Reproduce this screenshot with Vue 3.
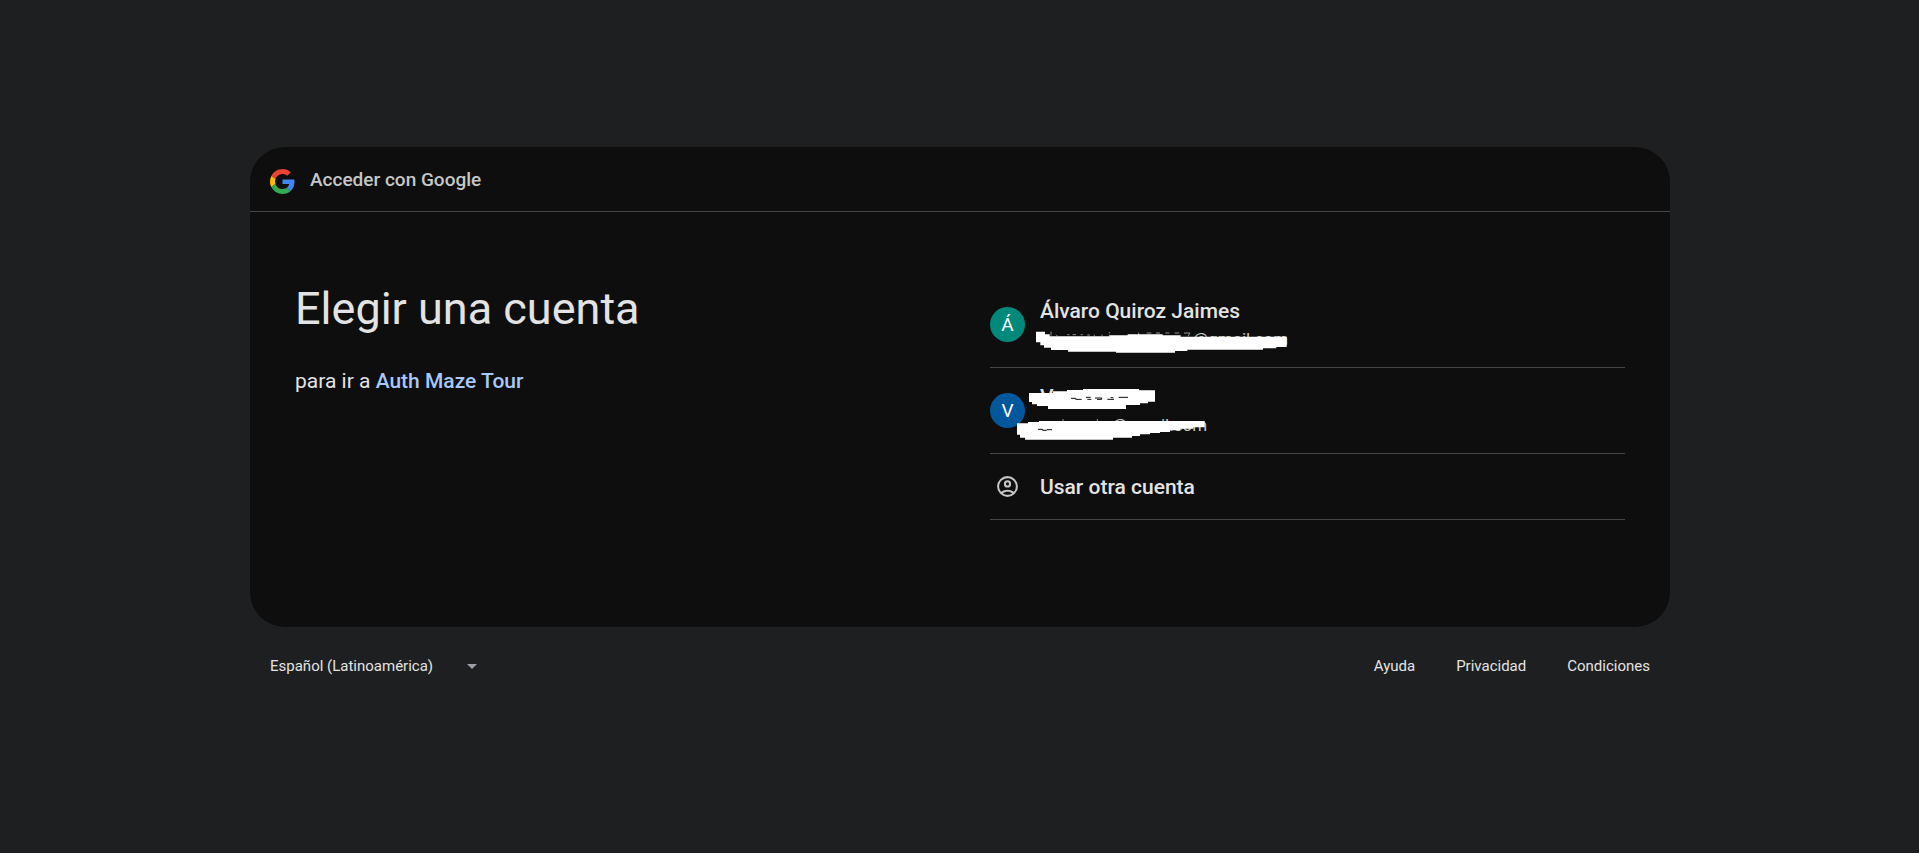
<script setup>
import { ref } from 'vue'

const language = ref('es-419')
const links = ['Ayuda', 'Privacidad', 'Condiciones']
</script>

<template>
  <div class="page">
    <main class="card">
      <header class="card-head">
        <svg class="g-logo" viewBox="0 0 48 48" aria-hidden="true">
          <path fill="#ea4335" d="M24 9.5c3.54 0 6.71 1.22 9.21 3.6l6.85-6.85C35.9 2.38 30.47 0 24 0 14.62 0 6.51 5.38 2.56 13.22l7.98 6.19C12.43 13.72 17.74 9.5 24 9.5z" />
          <path fill="#4285f4" d="M46.98 24.55c0-1.57-.15-3.09-.38-4.55H24v9.02h12.94c-.58 2.96-2.26 5.48-4.78 7.18l7.73 6c4.51-4.18 7.09-10.36 7.09-17.65z" />
          <path fill="#fbbc05" d="M10.53 28.59c-.48-1.45-.76-2.99-.76-4.59s.27-3.14.76-4.59l-7.98-6.19C.92 16.46 0 20.12 0 24c0 3.88.92 7.54 2.56 10.78l7.97-6.19z" />
          <path fill="#34a853" d="M24 48c6.48 0 11.93-2.13 15.89-5.81l-7.73-6c-2.15 1.45-4.92 2.3-8.16 2.3-6.26 0-11.57-4.22-13.47-9.91l-7.98 6.19C6.51 42.62 14.62 48 24 48z" />
        </svg>
        <span>Acceder con Google</span>
      </header>

      <div class="card-body">
        <section>
          <h1>Elegir una cuenta</h1>
          <p class="lead">para ir a <a href="#">Auth Maze Tour</a></p>
        </section>

        <ul class="accounts">
          <li>
            <button type="button" class="account">
              <span class="avatar green">Á</span>
              <span class="who">
                <span class="name">Álvaro Quiroz Jaimes</span>
                <span class="mail long">@gmail.com</span>
              </span>
              <svg class="scribble" viewBox="30 -9 960 258" aria-hidden="true">
                <path class="trace" d="M213 140v12M228 149l4 4M262 149h6M278 149h10M302 149h6M322 150h8M343 149v4M366 149v4M388 141v4M388 149v4M476 143v10M500 144h14M528 144h12M556 144h12M584 144h14M612 144h18l-6 10" />
                <path fill="#fff" d="M168 140h27v8h14v6h180v-3h54v-3h105v3h54v4h318v31h-31v4h-40v4H622v4h-37v5H408v-3H264v-5h-51v-7h-21v-7h-11v-9h-13z" />
              </svg>
            </button>
          </li>
          <li>
            <button type="button" class="account" aria-label="Cuenta V">
              <span class="avatar blue">V</span>
              <span class="who">
                <span class="name">V</span>
                <span class="mail short">@gmail.com</span>
              </span>
              <svg class="scribble" viewBox="30 -6 960 258" aria-hidden="true">
                <path class="trace" d="M249 147v8M352 147v8M480 59v4" />
                <path fill="#fff" d="M147 69h72v-5h42v-4h48v-3h168v4h48v34h-21v5h-24v5h-42v12H204v-9h-33v-5h-15v-7h-9z" />
                <path fill="#fff" d="M111 160h33v-4h33v-3h497v19h-34v4h-40v5h-30v5h-30v3h-30v4h-30v5h-24v5h-57v6H135v-6h-15v-9h-9z" />
                <path class="gap" d="M273 85h14v3h18M318 82h14M322 88h12M345 84h20v4h-14M382 88h20M392 83h8M416 82h28M174 178h14v3h12M200 179h16" />
              </svg>
            </button>
          </li>
          <li>
            <button type="button" class="account other">
              <span class="icon">
                <svg viewBox="0 0 24 24" aria-hidden="true">
                  <path fill="#c4c7c5" fill-rule="evenodd" d="M12 2a10 10 0 1 0 0 20 10 10 0 0 0 0-20zM7.350 18.500C8.660 17.560 10.260 17 12 17s3.340.56 4.650 1.500A7.950 7.950 0 0 1 12 20a7.950 7.950 0 0 1-4.650-1.500zm10.790-1.380A9.950 9.950 0 0 0 12 15c-2.320 0-4.450.8-6.140 2.120A8 8 0 1 1 20 12c0 1.950-.7 3.730-1.860 5.120zM12 6a3.500 3.500 0 1 0 0 7 3.500 3.500 0 0 0 0-7zm0 5a1.500 1.500 0 1 1 0-3 1.500 1.500 0 0 1 0 3z" />
                </svg>
              </span>
              <span class="name">Usar otra cuenta</span>
            </button>
          </li>
        </ul>
      </div>
    </main>

    <footer class="foot">
      <div class="language">
        <select v-model="language" aria-label="Idioma">
          <option value="es-419">Español (Latinoamérica)</option>
        </select>
        <svg class="caret" viewBox="0 0 10 5" aria-hidden="true"><path fill="#9aa0a6" d="M0 0h10L5 5z" /></svg>
      </div>
      <nav>
        <a v-for="link in links" :key="link" href="#">{{ link }}</a>
      </nav>
    </footer>
  </div>
</template>

<style>
body {
  margin: 0;
  background: #fff;
}
</style>

<style scoped>
.page {
  box-sizing: border-box;
  display: flex;
  flex-direction: column;
  justify-content: center;
  min-height: calc(100vh - 10px);
  padding: 0 249px 0 250px;
  background: #1e1f20;
  color: #e3e3e3;
  font-family: Roboto, "Liberation Sans", sans-serif;
}
.card {
  display: flex;
  flex-direction: column;
  min-height: 480px;
  border-radius: 35px;
  background: #0e0e0e;
}
.card-head {
  display: flex;
  align-items: center;
  gap: 15px;
  height: 64px;
  padding: 4px 20px 0;
  box-sizing: border-box;
  color: #c4c7c5;
  font-size: 19px;
  font-weight: 500;
  line-height: 24px;
}
.card-head span {
  padding-bottom: 2px;
}
.g-logo {
  width: 25px;
  height: 25px;
}
.card-body {
  display: grid;
  grid-template-columns: 1fr 1fr;
  column-gap: 60px;
  border-top: 1px solid #444746;
  padding: 70px 45px;
}
h1 {
  margin: 0;
  font-size: 45px;
  font-weight: 400;
  line-height: 53px;
}
.lead {
  margin: 31px 0 0;
  font-size: 21px;
  line-height: 30px;
}
.lead a {
  color: #a8c7fa;
  font-weight: 500;
  text-decoration: none;
}
.accounts {
  margin: 0;
  padding: 0;
  list-style: none;
}
.account {
  position: relative;
  display: flex;
  align-items: center;
  gap: 15px;
  box-sizing: border-box;
  width: 100%;
  height: 86px;
  padding: 0;
  border: 0;
  border-bottom: 1px solid #444746;
  background: none;
  color: inherit;
  font: inherit;
  text-align: left;
  cursor: pointer;
}
.account.other {
  height: 66px;
}
.avatar,
.icon {
  display: flex;
  flex: none;
  align-items: center;
  justify-content: center;
  width: 35px;
  height: 35px;
}
.avatar {
  border-radius: 50%;
  color: #fff;
  font-size: 19px;
}
.green {
  background: #00897b;
}
.blue {
  background: #01579b;
}
.icon svg {
  width: 25px;
  height: 25px;
}
.who {
  display: flex;
  flex-direction: column;
  gap: 2px;
}
.name {
  font-size: 21px;
  font-weight: 500;
  line-height: 26px;
}
.mail {
  color: #c4c7c5;
  font-size: 17px;
  line-height: 26px;
}
.mail.long {
  padding-left: 153px;
}
.mail.short {
  padding-left: 72px;
}
.scribble {
  position: absolute;
  top: 0;
  left: 0;
  width: 320px;
  height: 86px;
}
.trace {
  fill: none;
  stroke: #8f9190;
  stroke-width: 3;
}
.gap {
  fill: none;
  stroke: #0e0e0e;
  stroke-width: 3;
}
.foot {
  display: flex;
  align-items: center;
  justify-content: space-between;
  box-sizing: border-box;
  height: 79px;
  padding: 0 20px 2px;
  font-size: 15px;
}
.language {
  position: relative;
}
select {
  appearance: none;
  width: 207px;
  padding: 0;
  border: 0;
  background: none;
  color: inherit;
  font: inherit;
}
.caret {
  position: absolute;
  top: 7px;
  right: 0;
  width: 10px;
  height: 5px;
  pointer-events: none;
}
nav {
  display: flex;
  gap: 41px;
}
nav a {
  color: inherit;
  text-decoration: none;
}
</style>
